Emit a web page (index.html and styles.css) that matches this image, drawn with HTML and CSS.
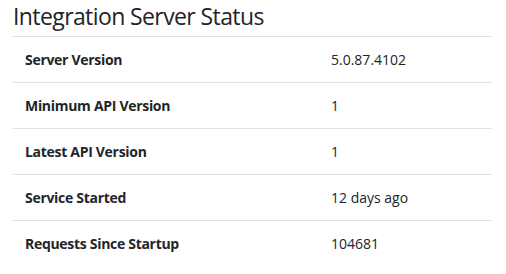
FILE: index.html
```html
<!DOCTYPE html>
<html>
<head>
<meta charset="utf-8">
<link rel="stylesheet" href="styles.css">
</head>
<body>
<div class="page">
  <h2 class="title">Integration Server Status</h2>
  <table class="status">
    <tr><th>Server Version</th><td>5.0.87.4102</td></tr>
    <tr><th>Minimum API Version</th><td>1</td></tr>
    <tr><th>Latest API Version</th><td>1</td></tr>
    <tr><th>Service Started</th><td>12 days ago</td></tr>
    <tr><th>Requests Since Startup</th><td>104681</td></tr>
  </table>
</div>
</body>
</html>
```
FILE: styles.css
```css
html, body {
  margin: 0;
  background: #fff;
}
body {
  font-family: "Open Sans", "Noto Sans", sans-serif;
  color: #212529;
}
.page {
  padding: 0 14px 0 13px;
}
.title {
  margin: 0 0 2px 0;
  font-weight: 400;
  font-size: 23px;
  letter-spacing: -0.6px;
  line-height: 32px;
  height: 34px;
  color: #212529;
}
.status {
  width: 479px;
  border-collapse: collapse;
  font-size: 14px;
  line-height: 21px;
}
.status th, .status td {
  border-top: 1px solid #dee2e6;
  padding: 12px 12px;
  text-align: left;
  vertical-align: top;
}
.status th {
  width: 282px;
  font-weight: 700;
  letter-spacing: -0.3px;
}
```
